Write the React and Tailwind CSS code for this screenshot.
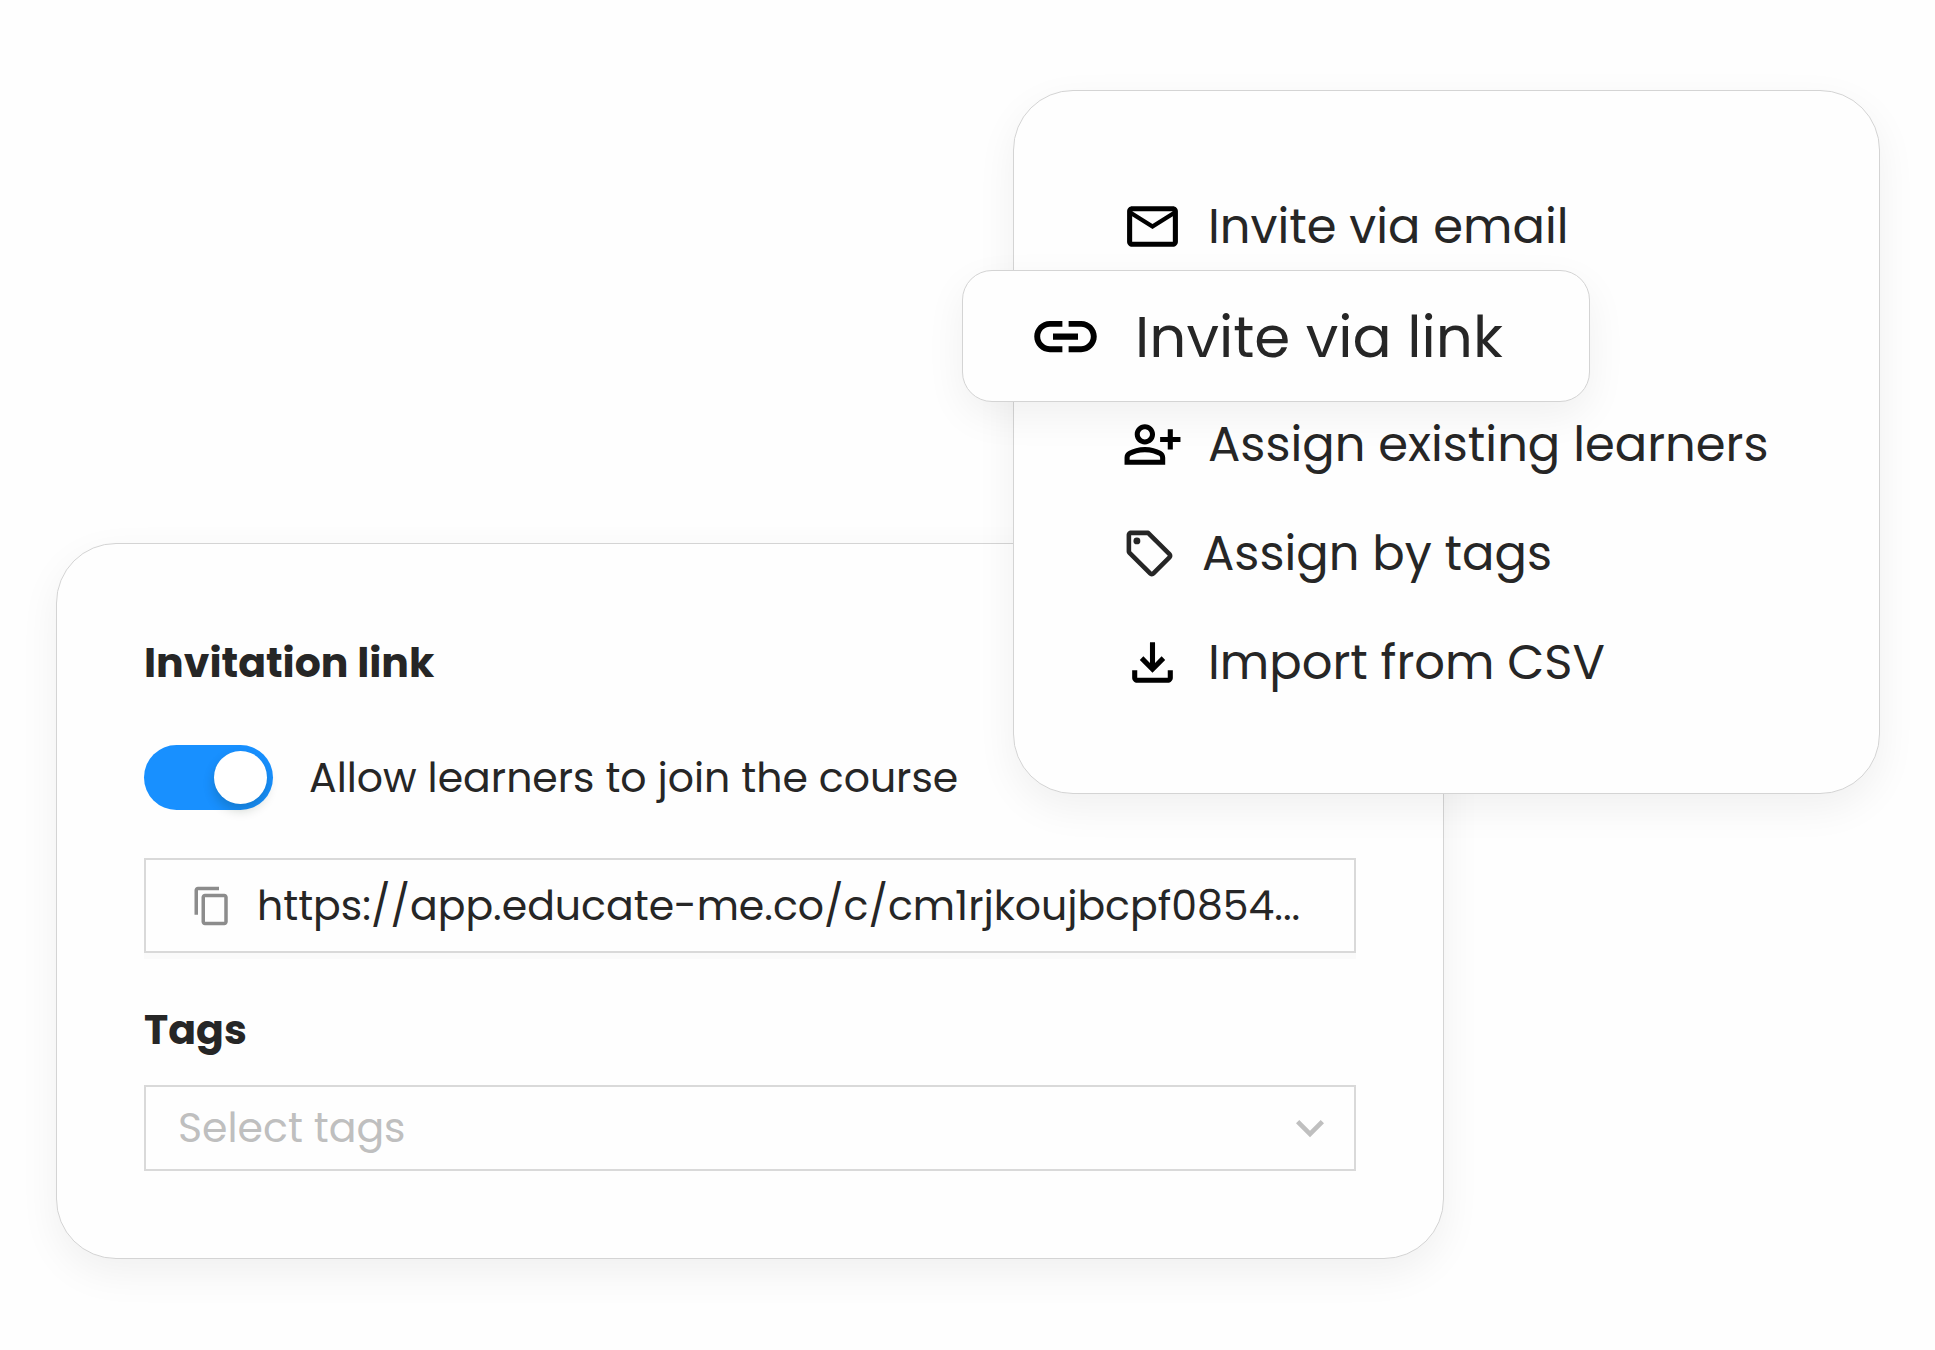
import React, { useState } from 'react';
import {
  MdExpandMore,
  MdLink,
  MdMailOutline,
  MdOutlineContentCopy,
  MdOutlineFileDownload,
  MdOutlineLocalOffer,
  MdOutlinePersonAddAlt
} from 'react-icons/md';

const INVITE_URL = 'https://app.educate-me.co/c/cm1rjkoujbcpf0854...';

const menuItems = [
  { id: 'email', label: 'Invite via email', icon: MdMailOutline },
  { id: 'link', label: 'Invite via link', icon: MdLink },
  { id: 'existing', label: 'Assign existing learners', icon: MdOutlinePersonAddAlt },
  { id: 'tags', label: 'Assign by tags', icon: MdOutlineLocalOffer, small: true },
  { id: 'csv', label: 'Import from CSV', icon: MdOutlineFileDownload }
];

const InviteMenu = ({ activeItem }) => {
  return (
    <ul className="relative z-10 col-start-2 col-end-4 row-start-1 rounded-[60px] border border-[#d4d4d4] bg-[#fefefe] pt-[81px] pb-[76px] shadow-[0_14px_40px_rgba(0,0,0,0.06)]">
      {menuItems.map((item) => {
        const Icon = item.icon;

        if (item.id === activeItem) {
          return (
            <li key={item.id} className="relative z-10 -mt-[11px] -mb-[12px] -ml-[52px]">
              <button
                type="button"
                className="flex h-[132px] w-[628px] items-center gap-[32px] rounded-[30px] border border-[#d4d4d4] bg-[#fefefe] pl-[65px] text-[58px] whitespace-nowrap shadow-[0_14px_40px_rgba(0,0,0,0.06)]"
              >
                <Icon className="size-[75px] text-black" />
                {item.label}
              </button>
            </li>
          );
        }

        return (
          <li key={item.id}>
            <button
              type="button"
              className="flex h-[109px] w-full items-center gap-[25px] pl-[108px] text-[48px] whitespace-nowrap"
            >
              <Icon className={item.small ? 'size-[55px]' : 'size-[61px] text-black'} />
              {item.label}
            </button>
          </li>
        );
      })}
    </ul>
  );
};

const InvitationLinkCard = () => {
  const [allowed, setAllowed] = useState(true);

  return (
    <section className="col-start-1 col-end-3 row-start-2 -mt-[251px] rounded-[60px] border border-[#d4d4d4] bg-[#fefefe] px-[87px] pt-[92px] pb-[87px] shadow-[0_14px_40px_rgba(0,0,0,0.06)]">
      <h2 className="text-[41px] leading-[54px] font-bold">Invitation link</h2>

      <label className="mt-[55px] flex items-center gap-[36px] text-[41px] leading-[65px]">
        <input
          type="checkbox"
          role="switch"
          checked={allowed}
          onChange={(e) => setAllowed(e.target.checked)}
          className="flex h-[65px] w-[129px] appearance-none items-center rounded-full bg-[#bfbfbf] px-[6px] before:size-[53px] before:rounded-full before:bg-white before:shadow-[0_6px_12px_rgba(0,35,11,0.2)] checked:justify-end checked:bg-[#1890ff]"
        />
        Allow learners to join the course
      </label>

      <div className="mt-[48px] flex h-[95px] items-center gap-[24px] border-2 border-[#d9d9d9] pl-[45px] shadow-[0_6px_0_rgba(0,0,0,0.016)]">
        <button type="button" aria-label="Copy link">
          <MdOutlineContentCopy className="size-[42px] text-[#8c8c8c]" />
        </button>
        <input
          type="text"
          readOnly
          aria-label="Invitation link"
          value={INVITE_URL}
          className="h-full min-w-0 flex-1 text-[41px] outline-none"
        />
      </div>

      <label htmlFor="tags" className="mt-[50px] block text-[41px] leading-[54px] font-bold">
        Tags
      </label>
      <div className="relative mt-[28px]">
        <select
          id="tags"
          className="block h-[86px] w-full appearance-none border-2 border-[#d9d9d9] bg-transparent pl-[32px] text-[41px] text-[#bfbfbf]"
        >
          <option>Select tags</option>
        </select>
        <MdExpandMore className="pointer-events-none absolute top-[15px] right-[18px] size-[56px] text-[#bfbfbf]" />
      </div>
    </section>
  );
};

const App = () => {
  return (
    <main className="min-h-screen bg-[#fefefe] pt-[90px] pr-[55px] pb-[80px] pl-[56px] font-['Poppins','Inter',sans-serif] text-[#262626]">
      <div className="grid grid-cols-[957fr_431fr_436fr]">
        <InviteMenu activeItem="link" />
        <InvitationLinkCard />
      </div>
    </main>
  );
};

export default App;
